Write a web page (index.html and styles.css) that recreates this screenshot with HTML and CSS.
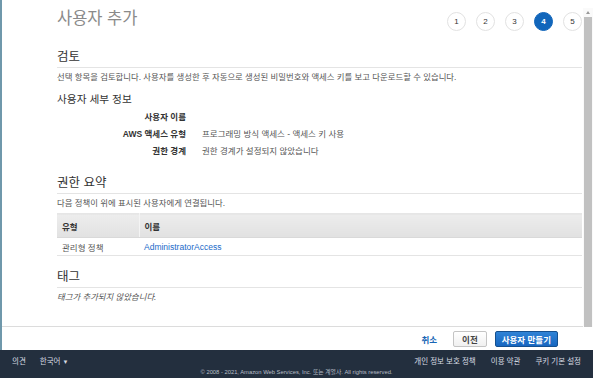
FILE: index.html
```html
<!DOCTYPE html>
<html lang="ko">
<head>
  <meta charset="UTF-8" />
  <meta name="viewport" content="width=device-width, initial-scale=1.0" />
  <title>사용자 추가 | IAM</title>
  <link rel="stylesheet" href="styles.css">
</head>

<body>
  <div class="app">
    <div class="edge"></div>

    <div class="console">
      <div class="workspace">
        <main class="wizard">
          <header class="wizard-head">
            <h1 class="title">사용자 추가</h1>
            <ol class="steps">
              <li>1</li>
              <li>2</li>
              <li>3</li>
              <li class="current">4</li>
              <li>5</li>
            </ol>
          </header>

          <h2 class="section-title first">검토</h2>
          <p class="note">선택 항목을 검토합니다. 사용자를 생성한 후 자동으로 생성된 비밀번호와 액세스 키를 보고 다운로드할 수 있습니다.</p>

          <h3 class="sub-title">사용자 세부 정보</h3>
          <dl class="details">
            <dt>사용자 이름</dt>
            <dd></dd>
            <dt>AWS 액세스 유형</dt>
            <dd>프로그래밍 방식 액세스 - 액세스 키 사용</dd>
            <dt>권한 경계</dt>
            <dd>권한 경계가 설정되지 않았습니다</dd>
          </dl>

          <h2 class="section-title">권한 요약</h2>
          <p class="note">다음 정책이 위에 표시된 사용자에게 연결됩니다.</p>

          <table class="policies">
            <thead>
              <tr><th class="col-type">유형</th><th>이름</th></tr>
            </thead>
            <tbody>
              <tr><td>관리형 정책</td><td><a href="#">AdministratorAccess</a></td></tr>
            </tbody>
          </table>

          <h2 class="section-title">태그</h2>
          <p class="note empty">태그가 추가되지 않았습니다.</p>
        </main>

        <div class="scrollbar">
          <span class="arrow"></span>
          <span class="thumb"></span>
        </div>
      </div>

      <div class="actions">
        <a href="#" class="cancel">취소</a>
        <button class="btn">이전</button>
        <button class="btn primary">사용자 만들기</button>
      </div>
    </div>
  </div>

  <footer class="footer">
    <div class="footer-row">
      <div class="footer-left">
        <a href="#">의견</a>
        <a href="#">한국어 <span class="caret">▼</span></a>
      </div>
      <div class="footer-right">
        <a href="#">개인 정보 보호 정책</a>
        <a href="#">이용 약관</a>
        <a href="#">쿠키 기본 설정</a>
      </div>
    </div>
    <p class="copyright">© 2008 - 2021, Amazon Web Services, Inc. 또는 계열사. All rights reserved.</p>
  </footer>
</body>
</html>
```

FILE: styles.css
```css
:root {
  --text-dark: #333;
  --text: #555;
  --muted: #8a8a8a;
  --line: #e4e4e4;
  --link: #1b6ac9;
  --blue: #1166bb;
  --footer: #232f3e;
}

* {
  box-sizing: border-box;
}

body {
  margin: 0;
  font-family: "Liberation Sans", "Noto Sans CJK KR", sans-serif;
  color: var(--text);
  background: #fff;
  width: 593px;
  height: 378px;
  overflow: hidden;
}

.app {
  display: flex;
  height: 350px;
}

.edge {
  width: 2px;
  background-color: #6f98ab;
}

.console {
  flex: 1;
  display: flex;
  flex-direction: column;
}

.workspace {
  display: flex;
  height: 327px;
}

.wizard {
  flex: 1;
  padding: 0 1px 0 55px;
  border-bottom: 1px solid #dcdcdc;
  overflow: hidden;
}

.wizard-head {
  display: flex;
  justify-content: space-between;
  align-items: flex-start;
  height: 33px;
}

.title {
  margin: 0;
  padding-top: 7px;
  font-size: 16.5px;
  line-height: 22px;
  font-weight: 400;
  color: var(--muted);
}

.steps {
  display: flex;
  gap: 10px;
  list-style: none;
  margin: 0;
  padding: 12px 0 0;
}

.steps li {
  width: 19px;
  height: 19px;
  border: 1px solid #e2e2e2;
  border-radius: 50%;
  display: flex;
  align-items: center;
  justify-content: center;
  font-size: 8px;
  color: var(--text-dark);
  background: #fff;
}

.steps li.current {
  background-color: var(--blue);
  border-color: var(--blue);
  color: #fff;
  font-weight: 700;
}

.section-title {
  margin: 13px 0 0;
  padding-bottom: 2px;
  border-bottom: 1px solid var(--line);
  font-size: 12.5px;
  line-height: 16px;
  font-weight: 400;
  color: var(--text-dark);
}

.section-title.first {
  margin-top: 16px;
}

.details + .section-title {
  margin-top: 17px;
}

.note {
  margin: 3px 0 0;
  font-size: 8.4px;
  line-height: 12px;
}

.note.empty {
  font-style: italic;
}

.sub-title {
  margin: 9px 0 0;
  font-size: 10.7px;
  line-height: 14px;
  font-weight: 400;
  color: var(--text-dark);
}

.details {
  display: grid;
  grid-template-columns: 129px 1fr;
  column-gap: 16px;
  grid-auto-rows: 17px;
  align-items: center;
  margin: 1px 0 0;
  font-size: 8.5px;
}

.details dt {
  text-align: right;
  font-weight: 700;
  color: var(--text-dark);
}

.details dd {
  margin: 0;
}

.policies {
  width: 100%;
  margin-top: 4px;
  border-collapse: collapse;
  font-size: 8.5px;
  margin-bottom: 13px;
}

.policies th {
  height: 24px;
  padding: 0 5px;
  text-align: left;
  font-weight: 700;
  color: var(--text-dark);
  background-image: linear-gradient(to bottom, #ededed, #e1e1e1);
  border-top: 1px solid #e6e6e6;
  border-bottom: 1px solid #d9d9d9;
}

.policies th.col-type {
  width: 82px;
  border-right: 1px solid #f4f4f4;
}

.policies td {
  height: 18px;
  padding: 0 5px;
  border-bottom: 1px solid var(--line);
}

.policies a {
  color: var(--link);
  text-decoration: none;
}

.scrollbar {
  width: 10px;
  margin-top: 8px;
  display: flex;
  flex-direction: column;
  align-items: center;
  background: #fafafa;
}

.arrow {
  margin-top: 3px;
  width: 0;
  height: 0;
  border-left: 2.5px solid transparent;
  border-right: 2.5px solid transparent;
  border-bottom: 3px solid #999;
}

.thumb {
  margin-top: 3px;
  width: 8px;
  flex: 1;
  background-color: #c1c1c1;
}

.actions {
  flex: 1;
  display: flex;
  align-items: center;
  justify-content: flex-end;
  gap: 8px;
  padding-right: 35px;
}

.cancel {
  color: #1866b5;
  font-weight: 700;
  font-size: 8.5px;
  text-decoration: none;
  margin-right: 8px;
}

.btn {
  height: 16px;
  padding: 0 8px;
  font-family: inherit;
  font-size: 8.5px;
  font-weight: 700;
  color: #444;
  border: 1px solid #c4c4c4;
  border-radius: 2px;
  background-image: linear-gradient(to bottom, #ffffff, #f0f0f0);
}

.btn.primary {
  padding: 0 6px;
  color: #fff;
  border-color: #15508f;
  background-image: linear-gradient(to bottom, #2f83d6, #1766c0);
}

.footer {
  height: 28px;
  background-color: var(--footer);
  color: #d8dce2;
  font-size: 7.5px;
}

.footer a {
  color: #d8dce2;
  text-decoration: none;
}

.footer-row {
  display: flex;
  justify-content: space-between;
  padding: 4px 12px 0;
  height: 17px;
  align-items: center;
}

.footer-left {
  display: flex;
  gap: 14px;
}

.footer-right {
  display: flex;
  gap: 15px;
}

.caret {
  font-size: 6px;
}

.copyright {
  margin: 0;
  text-align: center;
  font-size: 5.8px;
  line-height: 10px;
  color: #b8bec7;
}
```
